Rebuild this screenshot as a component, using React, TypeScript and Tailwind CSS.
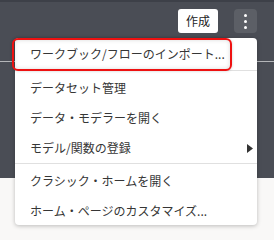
import React from "react";

const font = { fontFamily: '"Noto Sans CJK JP", "Noto Sans", sans-serif' };

function Item({ label, h = "h-[30px]", arrow = false }: { label: string; h?: string; arrow?: boolean }) {
  return (
    <div className={`${h} flex items-center justify-between pl-[15px] pr-[4px] text-[12px] text-[#363636] leading-none`}>
      <span>{label}</span>
      {arrow && (
        <svg width="6" height="9" viewBox="0 0 6 9">
          <polygon points="0,0 6,4.5 0,9" fill="#333333" />
        </svg>
      )}
    </div>
  );
}

export default function App() {
  return (
    <div className="relative w-[274px] h-[240px] overflow-hidden bg-[#f9f8f7]" style={font}>
      <div className="h-[178px] bg-[#4a4d55] border-t-2 border-[#3d4048] flex flex-col">
        <div className="flex justify-end items-center gap-[16px] pr-[17px] pt-[7px]">
          <button className="w-[40px] h-[24px] bg-white rounded-[3px] text-[12px] text-[#222222] leading-none flex items-center justify-center">
            作成
          </button>
          <button className="w-[23px] h-[24px] bg-[#5c5f66] rounded-[4px] flex flex-col items-center justify-center gap-[3px]">
            <span className="w-[3px] h-[3px] bg-white rounded-full"></span>
            <span className="w-[3px] h-[3px] bg-white rounded-full"></span>
            <span className="w-[3px] h-[3px] bg-white rounded-full"></span>
          </button>
        </div>
        <div className="mt-[28px] h-px bg-[#b4b6b9]"></div>
      </div>

      <div className="absolute left-[15px] top-[38px] w-[242px] h-[187px] bg-white rounded-[4px] shadow-[0_1px_4px_rgba(0,0,0,0.25)] flex flex-col">
        <Item label="ワークブック/フローのインポート..." h="h-[32px]" />
        <div className="h-px bg-[#e0e0e0] mb-[2px]"></div>
        <Item label="データセット管理" />
        <Item label="データ・モデラーを開く" />
        <Item label="モデル/関数の登録" arrow />
        <div className="h-px bg-[#e0e0e0] mb-[2px]"></div>
        <Item label="クラシック・ホームを開く" />
        <Item label="ホーム・ページのカスタマイズ..." h="h-[29px]" />
      </div>

      <div className="absolute left-[12px] top-[38px] w-[220px] h-[33px] border-2 border-[#ee1111] rounded-[6px] shadow-[inset_0_0_4px_rgba(0,0,0,0.15),0_0_3px_rgba(0,0,0,0.2)]"></div>
    </div>
  );
}
